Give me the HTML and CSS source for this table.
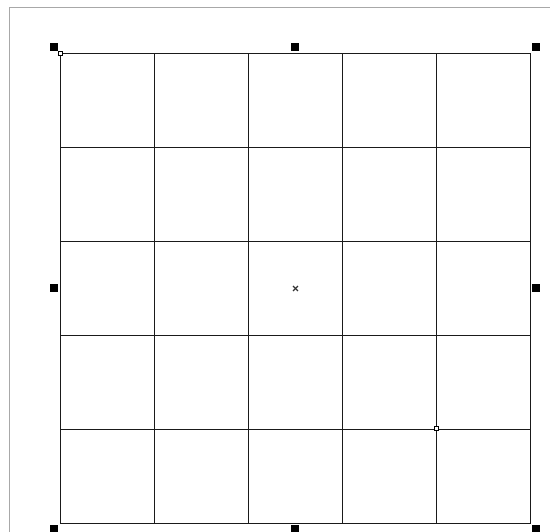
FILE: index.html
```html
<!DOCTYPE html>
<html>
<head>
<meta charset="utf-8">
<link rel="stylesheet" href="styles.css">
</head>
<body>
<div class="frame">
  <div class="board">
    <div class="cell"></div><div class="cell"></div><div class="cell"></div><div class="cell"></div><div class="cell"></div>
    <div class="cell"></div><div class="cell"></div><div class="cell"></div><div class="cell"></div><div class="cell"></div>
    <div class="cell"></div><div class="cell"></div><div class="cell"></div><div class="cell"></div><div class="cell"></div>
    <div class="cell"></div><div class="cell"></div><div class="cell"></div><div class="cell"></div><div class="cell"></div>
    <div class="cell"></div><div class="cell"></div><div class="cell"></div><div class="cell"></div><div class="cell"></div>

    <span class="handle h-tl"></span>
    <span class="handle h-tc"></span>
    <span class="handle h-tr"></span>
    <span class="handle h-ml"></span>
    <span class="handle h-mr"></span>
    <span class="handle h-bl"></span>
    <span class="handle h-bc"></span>
    <span class="handle h-br"></span>

    <span class="node n-origin"></span>
    <span class="node n-point"></span>

    <svg class="center-mark" width="7" height="7" viewBox="0 0 7 7">
      <path d="M1 1 L6 6 M6 1 L1 6" stroke="#333" stroke-width="1.4" fill="none"/>
    </svg>
  </div>
</div>
</body>
</html>
```

FILE: styles.css
```css
html, body {
  margin: 0;
  padding: 0;
  background: #fff;
  overflow: hidden;
  width: 550px;
  height: 532px;
}

.frame {
  margin: 7px 0 0 9px;
  width: 541px;
  height: 525px;
  border-top: 1px solid #a8a8a8;
  border-left: 1px solid #a8a8a8;
  padding: 45px 0 0 50px;
  box-sizing: border-box;
  overflow: hidden;
}

.board {
  position: relative;
  display: grid;
  grid-template-columns: repeat(5, 94px);
  grid-template-rows: repeat(5, 94px);
  width: 470px;
  height: 470px;
  border-top: 1px solid #1a1a1a;
  border-left: 1px solid #1a1a1a;
}

.cell {
  border-right: 1px solid #1a1a1a;
  border-bottom: 1px solid #1a1a1a;
}

.handle {
  position: absolute;
  width: 8px;
  height: 8px;
  background: #000;
}
.h-tl { left: -11px; top: -11px; }
.h-tc { left: 230px; top: -11px; }
.h-tr { left: 471px; top: -11px; }
.h-ml { left: -11px; top: 230px; }
.h-mr { left: 471px; top: 230px; }
.h-bl { left: -11px; top: 471px; }
.h-bc { left: 230px; top: 471px; }
.h-br { left: 471px; top: 471px; }

.node {
  position: absolute;
  width: 3px;
  height: 3px;
  background: #fff;
  border: 1px solid #000;
}
.n-origin { left: -3px; top: -3px; }
.n-point { left: 373px; top: 372px; }

.center-mark {
  position: absolute;
  left: 231px;
  top: 231px;
}
```
